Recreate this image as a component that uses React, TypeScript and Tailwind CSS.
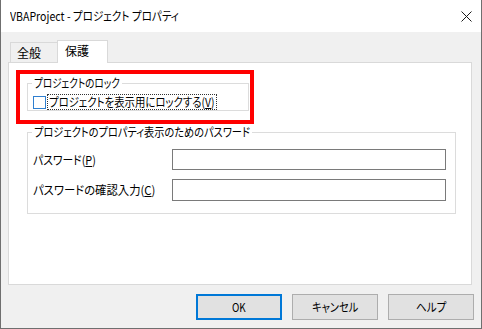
import React, { useLayoutEffect, useRef, useState } from "react";

const font = "font-['Noto_Sans_CJK_JP',sans-serif] [font-feature-settings:'palt']";

/** Fits a line of text horizontally into the width given by className (Windows UI fonts are narrower). */
function Fit({ className, children }: { className: string; children: React.ReactNode }) {
  const outer = useRef<HTMLSpanElement>(null);
  const inner = useRef<HTMLSpanElement>(null);
  const [s, setS] = useState(1);
  useLayoutEffect(() => {
    if (outer.current && inner.current) {
      const target = outer.current.clientWidth;
      const nat = inner.current.scrollWidth;
      if (nat > 0) setS(target / nat);
    }
  }, []);
  return (
    <span ref={outer} className={`inline-block align-top whitespace-nowrap ${className}`}>
      <span ref={inner} className="inline-block whitespace-nowrap origin-left" style={{ transform: `scaleX(${s})` }}>
        {children}
      </span>
    </span>
  );
}

export default function App() {
  return (
    <div className={`relative w-[482px] h-[329px] bg-[#f0f0f0] border-x border-b border-[#6f6f6f] flex flex-col text-[12px] text-black ${font}`}>
      {/* title bar */}
      <div className="h-[32px] bg-white flex items-center justify-between pl-[9px] pr-[9px] shrink-0">
        <span className="leading-[16px] flex">
          <Fit className="w-[169px]">VBAProject - プロジェクト プロパティ</Fit>
        </span>
        <svg width="11" height="11" viewBox="0 0 11 11" className="mt-[1px]">
          <path d="M0.5 0.5 L10.5 10.5 M10.5 0.5 L0.5 10.5" stroke="#1a1a1a" strokeWidth="1" fill="none" />
        </svg>
      </div>

      <div className="flex flex-col pl-[7px] pr-[9px] pt-[8px]">
        {/* tabs */}
        <div className="relative z-10 flex items-end h-[22px] pl-[2px]">
          <div className="h-[20px] w-[47px] bg-[#f0f0f0] border-t border-l border-[#d9d9d9] flex items-center pl-[6px] pt-[1px] leading-[16px]">
            全般
          </div>
          <div className="h-[23px] -mb-[1px] w-[51px] bg-white border-t border-x border-[#d9d9d9] flex items-start pl-[7px] pt-[2px] leading-[16px]">
            保護
          </div>
        </div>

        {/* panel */}
        <div className="w-[464px] h-[223px] bg-white border border-[#d9d9d9] flex flex-col items-start">
          <fieldset className="ml-[18px] mt-[12px] w-[222px] border border-[#dcdcdc]">
            <legend className="ml-[4px] px-[2px] leading-[16px]">
              <Fit className="w-[86px]">プロジェクトのロック</Fit>
            </legend>
            <div className="mt-[3px] h-[16px] flex items-center pl-[5px]">
              <span className="w-[13px] h-[13px] border border-[#2f7fd0] bg-white shrink-0" />
              <span className="ml-[1px] flex border border-dotted border-[#333] px-[1px] leading-[14px]">
                <Fit className="w-[166px]">
                  プロジェクトを表示用にロックする(<span className="underline">V</span>)
                </Fit>
              </span>
            </div>
          </fieldset>

          <fieldset className="ml-[18px] mt-[13px] w-[429px] border border-[#dcdcdc] pb-[12px]">
            <legend className="ml-[4px] px-[2px] leading-[16px]">
              <Fit className="w-[216px]">プロジェクトのプロパティ表示のためのパスワード</Fit>
            </legend>
            <div className="mt-[9px] grid grid-cols-[139px_274px] gap-y-[9px] pl-[5px] items-center">
              <span className="leading-[16px] flex">
                <Fit className="w-[63px]">
                  パスワード(<span className="underline">P</span>)
                </Fit>
              </span>
              <div className="h-[21px] border border-[#7a7a7a] bg-white" />
              <span className="leading-[16px] flex">
                <Fit className="w-[122px]">
                  パスワードの確認入力(<span className="underline">C</span>)
                </Fit>
              </span>
              <div className="h-[22px] border border-[#7a7a7a] bg-white" />
            </div>
          </fieldset>
        </div>
      </div>

      {/* buttons */}
      <div className="mt-[9px] flex justify-end gap-[10px] pr-[7px]">
        <button className="w-[86px] h-[26px] bg-[#e1e1e1] border border-[#0078d7] shadow-[inset_0_0_0_1px_#0078d7] leading-[16px] flex items-center justify-center">
          <Fit className="w-[14px]">OK</Fit>
        </button>
        <button className="w-[86px] h-[26px] bg-[#e1e1e1] border border-[#adadad] leading-[16px] flex items-center justify-center">
          <Fit className="w-[46px]">キャンセル</Fit>
        </button>
        <button className="w-[86px] h-[26px] bg-[#e1e1e1] border border-[#adadad] leading-[16px] flex items-center justify-center">
          <Fit className="w-[30px]">ヘルプ</Fit>
        </button>
      </div>

      {/* red annotation */}
      <div className="absolute left-[15px] top-[70px] w-[238px] h-[54px] border-[4px] border-[#ff0000] pointer-events-none" />
    </div>
  );
}
